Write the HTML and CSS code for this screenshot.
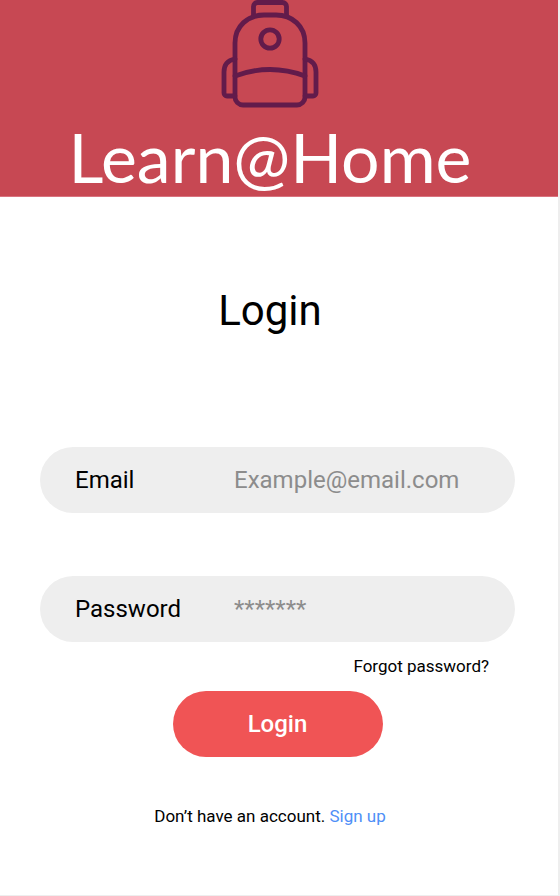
FILE: index.html
```html
<!DOCTYPE html>
<html lang="en">
<head>
  <meta charset="utf-8">
  <meta name="viewport" content="width=device-width, initial-scale=1">
  <title>Learn@Home – Login</title>
  <link rel="stylesheet" href="styles.css">
</head>
<body>
  <div class="screen">
    <header class="banner">
      <svg class="banner-icon" viewBox="0 0 98 108" fill="none" stroke="#621b4b" stroke-width="4.8" stroke-linecap="round" stroke-linejoin="round" aria-hidden="true">
        <path d="M32.5 16V6.5a4 4 0 0 1 4-4h25a4 4 0 0 1 4 4V16"/>
        <path d="M14 43C14 26 27 15 43 15h12C71 15 84 26 84 43V97a8 8 0 0 1-8 8H22a8 8 0 0 1-8-8Z"/>
        <circle cx="49" cy="39" r="9.2"/>
        <path d="M14 76Q49 63 84 76"/>
        <path d="M14 59Q3 61 3 72V93a3 3 0 0 0 3 3h8M84 59q11 2 11 13V93a3 3 0 0 1-3 3h-8"/>
      </svg>
      <div class="banner-name">Learn@Home</div>
    </header>
    <main class="content">
      <h1 class="title">Login</h1>
      <form class="form">
        <div class="field">
          <label class="field-label" for="email">Email</label>
          <input class="field-input" id="email" type="email" placeholder="Example@email.com">
        </div>
        <div class="field">
          <label class="field-label" for="password">Password</label>
          <input class="field-input" id="password" type="password" placeholder="*******">
        </div>
        <a class="forgot" href="#">Forgot password?</a>
        <button class="submit" type="submit">Login</button>
      </form>
      <p class="signup">Don’t have an account. <a class="signup-link" href="#">Sign up</a></p>
    </main>
  </div>
</body>
</html>
```
FILE: styles.css
```css
* {
  box-sizing: border-box;
}

body {
  margin: 0;
  background: #fff;
  color: #000;
  font-family: Roboto, "Liberation Sans", sans-serif;
}

.screen {
  min-height: 100vh;
  border-right: 2px solid #eee;
  border-bottom: 1px solid #eee;
}

.banner {
  display: flex;
  flex-direction: column;
  align-items: center;
  gap: 12px;
  padding: 0 18px 2px 0;
  border-bottom: 1px solid #d9737f;
  background: #c74853;
}

.banner-icon {
  display: block;
  width: 98px;
  height: 108px;
}

.banner-name {
  color: #fff;
  font-family: Lato, sans-serif;
  font-size: 68px;
  line-height: 74px;
}

.content {
  padding: 85px 43px 0 40px;
}

.title {
  margin: 0 15px 107px 0;
  font-size: 42px;
  font-weight: 400;
  line-height: 58px;
  text-align: center;
}

.form {
  display: flex;
  flex-direction: column;
}

.field {
  display: flex;
  align-items: center;
  height: 66px;
  padding: 0 35px;
  border-radius: 33px;
  background: #eee;
}

.field + .field {
  margin-top: 63px;
}

.field-label {
  flex: 0 0 159px;
  font-size: 24px;
  line-height: 32px;
}

.field-input {
  flex: 1;
  min-width: 0;
  padding: 0;
  border: 0;
  outline: 0;
  background: transparent;
  font: inherit;
  font-size: 24px;
  line-height: 32px;
}

.field-input::placeholder {
  color: #8c8c8c;
  opacity: 1;
}

.forgot {
  align-self: flex-end;
  margin: 12px 26px 13px 0;
  color: #000;
  font-size: 17px;
  line-height: 24px;
  text-decoration: none;
}

.submit {
  align-self: center;
  width: 210px;
  height: 66px;
  padding: 0;
  border: 0;
  border-radius: 33px;
  background: #f05455;
  color: #fff;
  font: inherit;
  font-size: 24px;
  font-weight: 500;
}

.signup {
  margin: 47px 15px 0 0;
  font-size: 17px;
  line-height: 24px;
  text-align: center;
}

.signup-link {
  color: #4f8ff7;
  text-decoration: none;
}
```
